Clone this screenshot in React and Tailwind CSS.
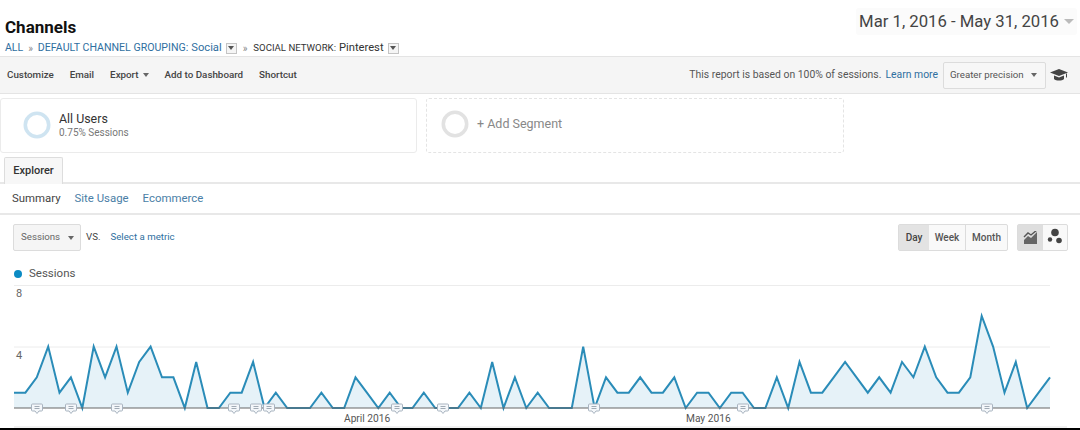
const font = { fontFamily: "Roboto, sans-serif" };

// Sessions per day, Mar 1 - May 31
const sessions = [
  1, 1, 2, 4, 1, 2, 0, 4, 2, 4, 1, 3, 4, 2, 2, 0, 3, 0, 0, 1, 1, 3, 0, 1, 0, 0, 0, 1, 0, 0, 2,
  1, 0, 1, 0, 0, 1, 0, 0, 0, 1, 0, 3, 0, 2, 0, 1, 0, 0, 0, 4, 0, 2, 1, 1, 2, 1, 1, 2, 0, 1,
  1, 0, 1, 1, 0, 0, 2, 0, 3, 1, 1, 2, 3, 2, 1, 2, 1, 3, 2, 4, 2, 1, 1, 2, 6, 4, 1, 3, 0, 1, 2,
];

const annotations = [37, 71, 117, 234, 256, 269, 397, 443, 594, 743, 987];

const BASE_Y = 123;
const points = sessions.map((v, i) => [14 + i * (1036 / 91), BASE_Y - v * 15.35]);
const linePath = points.map((p) => `${p[0].toFixed(1)},${p[1].toFixed(1)}`).join(" ");
const areaPath = `14,${BASE_Y} ${linePath} 1050,${BASE_Y}`;

const Caret = ({ className = "" }) => (
  <span className={`inline-block w-0 h-0 border-x-[3.5px] border-x-transparent border-t-[4px] ${className}`} />
);

const MiniDrop = () => (
  <span className="inline-flex items-center justify-center w-[11px] h-[11px] border border-[#c4c4c4] bg-[#f5f5f5] ml-[4px]">
    <Caret className="border-t-[#555]" />
  </span>
);

const Donut = ({ color }) => (
  <svg width="28" height="28" viewBox="0 0 28 28" className="shrink-0">
    <circle cx="14" cy="14" r="11.7" fill="none" stroke={color} strokeWidth="3.6" />
  </svg>
);

const Chart = () => (
  <svg width="1080" height="143" viewBox="0 0 1080 143" className="block">
    <line x1="14" x2="1050" y1="0.5" y2="0.5" stroke="#ececec" />
    <line x1="14" x2="1050" y1="62" y2="62" stroke="#ececec" />
    <polygon points={areaPath} fill="#e6f2f8" />
    <polyline points={linePath} fill="none" stroke="#2a8cb8" strokeWidth="2" strokeLinejoin="miter" />
    <line x1="14" x2="1050" y1={BASE_Y} y2={BASE_Y} stroke="#666" strokeWidth="1" />
    <text x="16" y="12" fontSize="11" fill="#666" fontFamily="Roboto, sans-serif">8</text>
    <text x="16" y="74" fontSize="11" fill="#666" fontFamily="Roboto, sans-serif">4</text>
    <text x="344" y="137" fontSize="10.2" fill="#555" fontFamily="Roboto, sans-serif">April 2016</text>
    <text x="686" y="137" fontSize="10.2" fill="#555" fontFamily="Roboto, sans-serif">May 2016</text>
    {annotations.map((x) => (
      <g key={x} transform={`translate(${x} ${BASE_Y})`}>
        <path d="M-4.5 -4h9a1 1 0 0 1 1 1v5a1 1 0 0 1 -1 1h-2.5l-2 2.5l-2 -2.5h-2.5a1 1 0 0 1 -1 -1v-5a1 1 0 0 1 1 -1z" fill="#f4f7fa" stroke="#a9b4c0" />
        <path d="M-2.5 -1.5h5M-2.5 0.5h5" stroke="#8b97a3" strokeWidth="0.8" />
      </g>
    ))}
    <line x1="14" x2="1067" y1="142" y2="142" stroke="#e3e3e3" />
  </svg>
);

const App = () => {
  return (
    <div className="w-[1080px] h-[430px] overflow-hidden bg-white" style={font}>
      {/* Title + date range */}
      <div className="flex justify-between h-[56px] pl-[5px] pr-[3px]">
        <div>
          <h1 className="pt-[16px] text-[17px] leading-[22px] font-bold text-[#111]">Channels</h1>
          <div className="flex items-center mt-[1px] h-[18px] text-[#2f6f9f]">
            <span className="text-[10.5px]">ALL</span>
            <span className="mx-[5px] text-[#888] text-[10px]">»</span>
            <span className="text-[10.6px]">DEFAULT CHANNEL GROUPING:</span>
            <span className="text-[11.2px] ml-[3px]">Social</span>
            <MiniDrop />
            <span className="mx-[6px] text-[#888] text-[10px]">»</span>
            <span className="text-[#333] text-[9.6px]">SOCIAL NETWORK:</span>
            <span className="text-[#333] text-[11.2px] ml-[3px]">Pinterest</span>
            <MiniDrop />
          </div>
        </div>
        <div className="flex items-center gap-[5px] h-[27px] mt-[8px] pl-[3px] pr-[3px] rounded-[3px] bg-[#fbfbfb] text-[#444] text-[16.7px]">
          <span>Mar 1, 2016 - May 31, 2016</span>
          <Caret className="border-t-[#bbb] border-x-[5px] border-t-[5px]" />
        </div>
      </div>

      {/* Toolbar */}
      <div className="flex items-center justify-between h-[38px] bg-[#f5f5f5] border-y border-[#e4e4e4] pl-[7px] pr-[12px] text-[9.8px] font-medium text-[#444]">
        <div className="flex items-center gap-[16px]">
          <span>Customize</span>
          <span>Email</span>
          <span className="flex items-center gap-[4px]">Export <Caret className="border-t-[#666]" /></span>
          <span>Add to Dashboard</span>
          <span>Shortcut</span>
        </div>
        <div className="flex items-center font-normal text-[10.4px] text-[#555]">
          <span>This report is based on 100% of sessions.</span>
          <span className="ml-[4px] text-[#2f6f9f]">Learn more</span>
          <span className="flex items-center justify-between ml-[5px] w-[103px] h-[27px] pl-[6px] pr-[8px] bg-[#f7f7f7] border border-[#dcdcdc] rounded-[2px] text-[9.7px] text-[#555]">
            Greater precision <Caret className="border-t-[#666]" />
          </span>
          <svg width="18" height="13" viewBox="0 0 18 13" className="ml-[4px]">
            <path d="M9 0L18 3.5L9 7L0 3.5Z" fill="#444" />
            <path d="M4 6.5v3.5c2 2 8 2 10 0V6.5l-5 2Z" fill="#444" />
            <path d="M16.5 4.5v4" stroke="#444" />
          </svg>
        </div>
      </div>

      {/* Segments */}
      <div className="flex gap-[9px] mt-[4px] h-[55px]">
        <div className="flex items-center w-[417px] pl-[22px] pb-[1px] border border-[#ebebeb] rounded-[3px]">
          <Donut color="#cfe4f1" />
          <div className="ml-[8px]">
            <div className="text-[12.4px] leading-[15px] text-[#333]">All Users</div>
            <div className="text-[10px] leading-[14px] text-[#777]">0.75% Sessions</div>
          </div>
        </div>
        <div className="flex items-center w-[418px] pl-[14px] pb-[3px] border border-dashed border-[#e4e4e4] rounded-[3px]">
          <Donut color="#e2e2e2" />
          <span className="ml-[8px] text-[12.5px] text-[#888]">+ Add Segment</span>
        </div>
      </div>

      {/* Tabs */}
      <div className="h-[31px] pt-[4px] pl-[4px] border-b-2 border-[#e8e8e8]">
        <div className="flex items-center justify-center w-[59px] h-[27px] bg-[#f7f7f7] border border-b-0 border-[#ddd] rounded-t-[2px] text-[11px] font-medium text-[#333]">
          Explorer
        </div>
      </div>
      <div className="flex items-center gap-[14px] h-[31px] pl-[12px] border-b-2 border-[#e8e8e8] text-[11.4px] text-[#4a7ea6]">
        <span className="text-[#444]">Summary</span>
        <span>Site Usage</span>
        <span>Ecommerce</span>
      </div>

      {/* Metric + granularity */}
      <div className="flex items-center justify-between h-[36px] pt-[9px] pl-[13px] pr-[12px]">
        <div className="flex items-center text-[9.7px]">
          <span className="flex items-center justify-between w-[68px] h-[27px] pl-[7px] pr-[6px] bg-[#f5f5f5] border border-[#dcdcdc] rounded-[2px] text-[#666]">
            Sessions <Caret className="border-t-[#666]" />
          </span>
          <span className="ml-[5px] text-[#444]">VS.</span>
          <span className="ml-[10px] text-[#2f6f9f]">Select a metric</span>
        </div>
        <div className="flex items-center">
          <div className="flex h-[27px] text-[10px] font-medium text-[#555] border border-[#dcdcdc] rounded-[2px] bg-[#f9f9f9]">
            <span className="flex items-center justify-center w-[30px] bg-[#e3e3e3] text-[#444]">Day</span>
            <span className="flex items-center justify-center w-[37px] border-r border-[#dcdcdc]">Week</span>
            <span className="flex items-center justify-center w-[41px]">Month</span>
          </div>
          <div className="flex ml-[9px] h-[27px] border border-[#dcdcdc] rounded-[2px] bg-[#f9f9f9]">
            <span className="flex items-center justify-center w-[25px] bg-[#dedede]">
              <svg width="16" height="14" viewBox="0 0 16 14">
                <path d="M1 9L5 5L8 7L14 1V13H1Z" fill="#666" />
                <path d="M1 6L5 2L8 4L14 -1" fill="none" stroke="#555" strokeWidth="1.4" />
              </svg>
            </span>
            <span className="flex items-center justify-center w-[24px]">
              <svg width="16" height="19" viewBox="0 0 16 19">
                <circle cx="8" cy="4.5" r="3.8" fill="#444" />
                <circle cx="3" cy="11.5" r="2.2" fill="#444" />
                <circle cx="12" cy="12.5" r="2.8" fill="#444" />
              </svg>
            </span>
          </div>
        </div>
      </div>

      {/* Legend */}
      <div className="flex items-center h-[34px] pt-[11px] pl-[14px] text-[11.5px] text-[#555]">
        <span className="w-[8px] h-[8px] rounded-full bg-[#0b8bc4]" />
        <span className="ml-[7px]">Sessions</span>
      </div>

      <Chart />
      <div className="h-[2px] bg-black" />
    </div>
  );
};

export default App;
